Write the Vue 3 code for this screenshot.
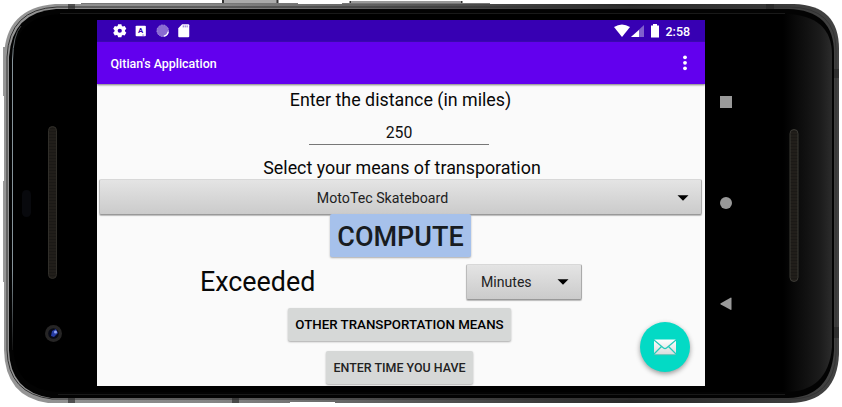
<script setup>
const statusIcons = ['gear', 'letter', 'dial', 'card']
</script>

<template>
  <main class="stage">
    <svg class="frame" width="842" height="407" viewBox="0 0 842 407" aria-hidden="true">
      <defs>
        <linearGradient id="metal" x1="0" x2="1" y1="0" y2="0">
          <stop offset="0" stop-color="#969696" />
          <stop offset=".25" stop-color="#858585" />
          <stop offset=".5" stop-color="#555" />
          <stop offset=".75" stop-color="#292929" />
          <stop offset="1" stop-color="#424242" />
        </linearGradient>
        <linearGradient id="glass" x1="0" x2="1" y1="0" y2="0">
          <stop offset="0" stop-color="#000" />
          <stop offset=".94" stop-color="#000" />
          <stop offset=".985" stop-color="#1b1b1b" />
          <stop offset="1" stop-color="#2b2b2b" />
        </linearGradient>
        <linearGradient id="edge" gradientUnits="userSpaceOnUse" x1="0" x2="0" y1="26" y2="350">
          <stop offset="0" stop-color="#444" />
          <stop offset=".1" stop-color="#87949b" />
          <stop offset=".75" stop-color="#87949b" />
          <stop offset="1" stop-color="#111" />
        </linearGradient>
        <pattern id="mesh" width="4" height="3" patternUnits="userSpaceOnUse">
          <rect width="4" height="3" fill="#1b1916" />
          <path d="M0 1h4" stroke="#2b2823" stroke-width=".7" />
        </pattern>
      </defs>
      <path d="M222.500 4V0H278V4z" fill="#aaa" />
      <path d="M223 0v3.500M277.500 0v3.500M350.500 1v3M461.500 1v3" stroke="#333" stroke-width="2" />
      <path d="M351.500 1H460.500V4H351.500z" fill="#999" />
      <path d="M81 3H298V5H81zM342 3H490V5H342z" fill="#777" />
      <path d="M3 47h3v49H3zm0 134h3v101H3z" fill="#999" />
      <path d="M55 4H794Q839 5 839 49V354Q837 402 790 403H48Q5 397 4 350V57Q5 8 55 4Z" fill="url(#metal)" />
      <path d="M57 7H790Q836 8 836 50V353Q834 399 790 399H52Q8 394 7 350V57Q9 9 57 7Z" fill="none" stroke="#333" />
      <path d="M56 9H788Q834 10 834 53V350Q831 397 788 398H51Q10 392 9 350V57Q12 12 56 9Z" fill="#030303" />
      <path d="M58 14H785Q832 15 832 55V347Q828 392 785 392H56Q14 389 13 346V60Q15 16 58 14Z" fill="url(#glass)" />
      <path d="M60 13.500H785M58 394.500H785" stroke="#191919" />
      <path d="M21 26Q13 35 12.500 60V350" fill="none" stroke="url(#edge)" />
      <path d="M68 4h7v5h-7zM68 398h7v5h-7zM232 398h7v5h-7zM766 4h8v5h-8zM834 69h5v9h-5zM834 327h5v11h-5z" fill="#252525" opacity=".6" />
      <path d="M290 402H335V404H290z" fill="#fff" />
      <rect x="48.500" y="126.500" width="8" height="152" rx="4" fill="url(#mesh)" stroke="#302e29" />
      <rect x="790" y="129.500" width="8" height="152" rx="4" fill="url(#mesh)" stroke="#3b3a35" />
      <rect x="22" y="190" width="9" height="27" rx="4.500" fill="#08090d" />
      <circle cx="53.500" cy="333.500" r="8.500" fill="#262525" />
      <circle cx="53.500" cy="333.500" r="5.300" fill="#080a16" />
      <path d="M52 331l4-2 2 4-4 4-3-1z" fill="#253ba2" />
      <circle cx="55.500" cy="332" r="1.500" fill="#91a4f4" />
    </svg>

    <section class="screen">
      <header class="status">
        <svg v-for="icon in statusIcons" :key="icon" class="status-icon" viewBox="0 0 14 14">
          <path v-if="icon === 'gear'" fill="#fff" fill-rule="evenodd" d="M5.300.2h3.400l.5 1.900 1 .6 1.900-.6 1.700 2.900-1.400 1.400v1.200l1.400 1.400-1.700 2.900-1.900-.6-1 .6-.5 1.900H5.300L4.800 11.900l-1-.6-1.900.6L.2 9l1.400-1.400V6.400L.2 5l1.700-2.900 1.900.6 1-.6zM7 4.800a2.200 2.200 0 1 0 0 4.400a2.200 2.200 0 1 0 0-4.400z" />
          <template v-else-if="icon === 'letter'">
            <rect x="1.700" y="1.700" width="10.600" height="11" rx="1" fill="#fff" />
            <text x="6.800" y="9.800" text-anchor="middle" class="letter">A</text>
            <path d="M8.500 11.500h2" stroke="#8b6bd1" stroke-width=".8" />
          </template>
          <template v-else-if="icon === 'dial'">
            <circle cx="7" cy="7" r="6" fill="#8a6bd2" stroke="#b7a4e5" stroke-dasharray="1 .7" />
            <path d="M12.700 8A5.800 5.800 0 0 1 8 12.700" fill="none" stroke="#fff" stroke-width="1.300" />
          </template>
          <template v-else>
            <path d="M5.300.200h6.400q1 0 1 1V12.800q0 1-1 1H2.300q-1 0-1-1V4.300z" fill="#fff" />
            <path d="M6.500 1.500v2m2-2v2m2-2v2" stroke="#8065ce" />
          </template>
        </svg>
        <svg class="signals" width="46" height="16" viewBox="0 0 46 16">
          <path d="M0 4Q8-1 16 4L8 14z" fill="#fff" />
          <path d="M30 2V14H17z" fill="#8060cd" />
          <path d="M25 7V14H17z" fill="#fff" />
          <path d="M37 2.500h2V1h4v1.500h2V14.500h-8z" fill="#fff" />
        </svg>
        <span class="clock">2:58</span>
      </header>
      <div class="toolbar">
        <h1>Qitian's Application</h1>
        <svg width="4" height="16" viewBox="0 0 4 16" fill="#fff">
          <circle cx="2" cy="2.300" r="1.900" /><circle cx="2" cy="7.800" r="1.900" /><circle cx="2" cy="13.300" r="1.900" />
        </svg>
      </div>
      <div class="content">
        <p class="label distance">Enter the distance (in miles)</p>
        <div class="field">250</div>
        <p class="label means">Select your means of transporation</p>
        <div class="select wide">
          <span>MotoTec Skateboard</span>
          <svg width="12" height="6" viewBox="0 0 12 6"><path d="M.5.300h11L6 5.800z" /></svg>
        </div>
        <button class="button compute">COMPUTE</button>
        <div class="result">
          <span class="value">Exceeded</span>
          <div class="select unit">
            <span>Minutes</span>
            <svg width="12" height="6" viewBox="0 0 12 6"><path d="M.5.300h11L6 5.800z" /></svg>
          </div>
        </div>
        <button class="button other">OTHER TRANSPORTATION MEANS</button>
        <button class="button time">ENTER TIME YOU HAVE</button>
      </div>
      <div class="fab">
        <svg width="24" height="18" viewBox="0 0 24 18">
          <defs><linearGradient id="mail" x2="0" y2="1"><stop stop-color="#fff" /><stop offset="1" stop-color="#d9dddd" /></linearGradient></defs>
          <rect x="1" y="1.500" width="22" height="15" rx="1" fill="url(#mail)" />
          <path d="M1 2L10.500 10Q12 11.300 13.500 10L23 2M1 16L8.500 8.500M23 16L15.500 8.500" fill="none" stroke="#25cbbb" stroke-width="1.200" />
          <path d="M1.500 16.800h21" stroke="#7fa7a1" stroke-width=".6" />
        </svg>
      </div>
    </section>
    <nav class="nav">
      <svg width="12" height="12"><rect width="12" height="12" fill="#999" /></svg>
      <svg width="12" height="12"><circle cx="6" cy="6" r="6" fill="#999" /></svg>
      <svg width="12" height="14"><path d="M.8 6.200L10.500.700q1-.5 1 .6v11q0 1-1 .5L.8 7.600q-.9-.7 0-1.400z" fill="#999" /></svg>
    </nav>
  </main>
</template>

<style>
body { background: #fff; overflow: hidden; }
</style>

<style scoped>
.stage { position: relative; display: flex; width: 842px; height: 407px; padding: 20px 0 0 97px; box-sizing: border-box; font-family: Roboto, sans-serif; color: #111; }
.frame { position: absolute; inset: 0; }
.screen { position: relative; width: 608px; height: 366px; background: #fafafa; overflow: hidden; }
.status { display: flex; align-items: center; height: 22px; padding-left: 16px; background: #3700b3; color: #fff; }
.status-icon { width: 13.500px; height: 13.500px; margin-right: 7.800px; }
.letter { font: 700 8px Roboto, sans-serif; fill: #3700b3; }
.signals { margin-left: auto; }
.clock { width: 26px; margin: 1px 13.500px 0 5.500px; font-size: 12.500px; font-weight: 500; white-space: nowrap; }
.toolbar { display: flex; align-items: center; justify-content: space-between; height: 42px; padding: 0 18px 0 13.500px; box-sizing: border-box; background: #6200ee; color: #fff; box-shadow: 0 1px 2px #777; }
h1 { margin: 1px 0 0; font-size: 12.450px; font-weight: 500; }
.content { display: flex; flex-direction: column; align-items: center; }
.label { margin: 0; font-size: 17.850px; line-height: 24px; white-space: nowrap; color: #080808; }
.distance { margin: 4px 1px 0 0; }
.field { width: 180px; height: 33px; border-bottom: 1px solid #777; box-sizing: border-box; margin-right: 4px; padding-top: 10px; font-size: 15.800px; line-height: 21px; text-align: center; }
.means { margin: 11px 0 0 2px; }
.select { display: flex; align-items: center; box-sizing: border-box; border: 1px solid; border-color: #d8d8d8 #aaa #999 #bbb; border-radius: 2px; background: linear-gradient(#e4e4e4, #cbcbcb); box-shadow: 0 1px 1px #bbb; color: #222; }
.wide { width: 603px; height: 36px; margin: -1px 1px 0 0; padding: 1px 12px 0 0; font-size: 14.200px; }
.wide span { flex: 1; text-align: center; margin-right: 12px; }
.button { display: flex; flex-shrink: 0; align-items: center; justify-content: center; padding: 0; border: 0; border-radius: 2px; background: #d6d8d7; box-shadow: 0 1px 2px #aaa; font-family: Roboto, sans-serif; font-weight: 500; white-space: nowrap; color: #111; }
.compute { position: relative; width: 141px; height: 43px; margin: -1px 1px 0 0; background: #a6c1eb; color: #181c21; font-size: 27px; padding-top: 3px; }
.result { display: flex; align-items: center; justify-content: space-between; width: 382px; height: 36px; margin: 7px 20px 0 0; }
.value { font-size: 26.850px; color: #080808; }
.unit { width: 116px; height: 36px; padding: 0 12px 0 14px; justify-content: space-between; font-size: 14.100px; }
.other { width: 223px; height: 33px; margin: 8px 3px 0 0; font-size: 13.300px; color: #000; }
.time { width: 147px; height: 33px; margin: 10px 3px 0 0; font-size: 12.450px; color: #222; }
.fab { position: absolute; right: 15px; bottom: 14px; width: 50px; height: 50px; border-radius: 50%; background: #03dac5; display: grid; place-items: center; box-shadow: 0 2px 5px #999; }
.nav { position: relative; display: flex; flex-direction: column; align-items: center; justify-content: space-between; width: 12px; height: 215px; margin: 76px 0 0 15px; }
</style>
